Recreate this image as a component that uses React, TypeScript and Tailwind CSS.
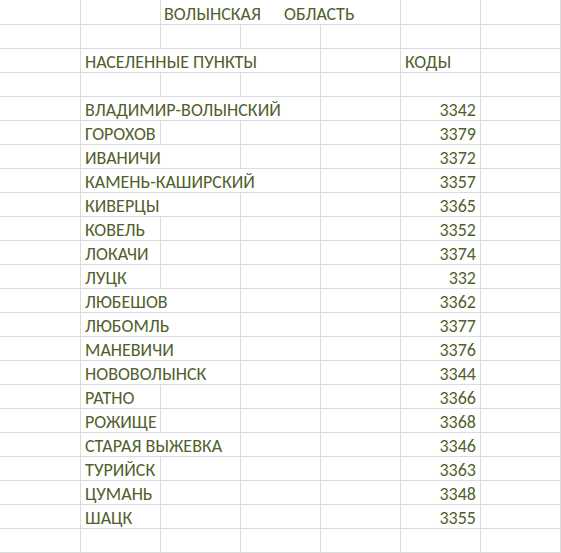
const rows: { name: string; span: number; code: string }[] = [
  { name: "ВЛАДИМИР-ВОЛЫНСКИЙ", span: 3, code: "3342" },
  { name: "ГОРОХОВ", span: 1, code: "3379" },
  { name: "ИВАНИЧИ", span: 2, code: "3372" },
  { name: "КАМЕНЬ-КАШИРСКИЙ", span: 3, code: "3357" },
  { name: "КИВЕРЦЫ", span: 2, code: "3365" },
  { name: "КОВЕЛЬ", span: 1, code: "3352" },
  { name: "ЛОКАЧИ", span: 1, code: "3374" },
  { name: "ЛУЦК", span: 1, code: "332" },
  { name: "ЛЮБЕШОВ", span: 2, code: "3362" },
  { name: "ЛЮБОМЛЬ", span: 2, code: "3377" },
  { name: "МАНЕВИЧИ", span: 2, code: "3376" },
  { name: "НОВОВОЛЫНСК", span: 2, code: "3344" },
  { name: "РАТНО", span: 1, code: "3366" },
  { name: "РОЖИЩЕ", span: 1, code: "3368" },
  { name: "СТАРАЯ ВЫЖЕВКА", span: 2, code: "3346" },
  { name: "ТУРИЙСК", span: 1, code: "3363" },
  { name: "ЦУМАНЬ", span: 1, code: "3348" },
  { name: "ШАЦК", span: 1, code: "3355" },
];

const spanClass: Record<number, string> = {
  1: "col-span-1",
  2: "col-span-2",
  3: "col-span-3",
};

function Cell({ className = "", children }: { className?: string; children?: React.ReactNode }) {
  return (
    <div
      className={`flex items-end overflow-hidden whitespace-nowrap border-b border-r border-[#dadcdd] pb-[1px] ${className}`}
    >
      {children}
    </div>
  );
}

function Row({ first = false, children }: { first?: boolean; children: React.ReactNode }) {
  return (
    <div className={`grid grid-cols-[81px_repeat(5,80px)_80px] ${first ? "h-[25px]" : "h-6"}`}>
      {children}
    </div>
  );
}

function EmptyRow() {
  return (
    <Row>
      {Array.from({ length: 7 }).map((_, i) => (
        <Cell key={i} />
      ))}
    </Row>
  );
}

export default function App() {
  return (
    <div
      className="h-[553px] w-[561px] overflow-hidden bg-white text-[18px] leading-none text-[#505f2c]"
      style={{ fontFamily: "Carlito, 'Open Sans', sans-serif" }}
    >
      <Row first>
        <Cell />
        <Cell />
        <Cell className="col-span-3 pl-[3px]">
          <span className="inline-block w-[120px]">ВОЛЫНСКАЯ</span>
          <span>ОБЛАСТЬ</span>
        </Cell>
        <Cell />
        <Cell />
      </Row>
      <EmptyRow />
      <Row>
        <Cell />
        <Cell className="col-span-3 pl-1">НАСЕЛЕННЫЕ ПУНКТЫ</Cell>
        <Cell />
        <Cell className="pl-1">КОДЫ</Cell>
        <Cell />
      </Row>
      <EmptyRow />
      {rows.map((r) => (
        <Row key={r.name}>
          <Cell />
          <Cell className={`${spanClass[r.span]} pl-1`}>{r.name}</Cell>
          {Array.from({ length: 3 - r.span }).map((_, i) => (
            <Cell key={i} />
          ))}
          <Cell />
          <Cell className="justify-end pr-1">{r.code}</Cell>
          <Cell />
        </Row>
      ))}
      <EmptyRow />
    </div>
  );
}
